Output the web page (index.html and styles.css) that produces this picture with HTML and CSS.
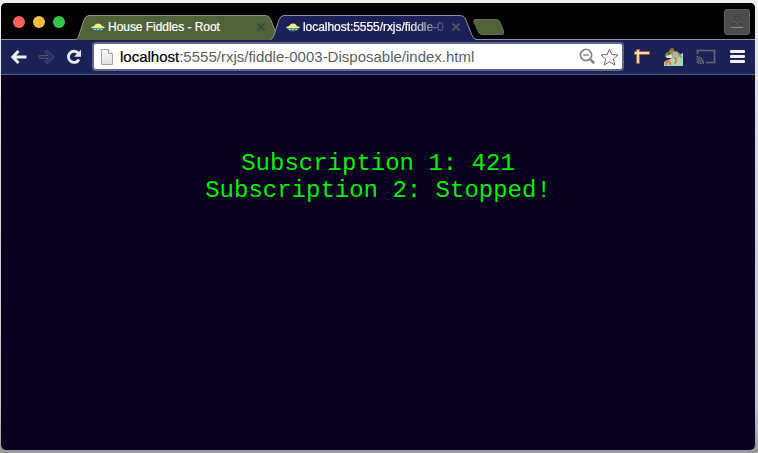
FILE: index.html
```html
<!DOCTYPE html>
<html lang="en">
<head>
<meta charset="utf-8">
<title>localhost:5555/rxjs/fiddle-0003-Disposable/index.html</title>
<link rel="stylesheet" href="styles.css">
</head>
<body>
<svg class="defs" width="0" height="0" aria-hidden="true">
  <symbol id="ufo" viewBox="0 0 15 9">
    <path d="M3.500 3.500Q4 .3 7.500 .3T11.500 3.500Z" fill="#f6ee88"/>
    <ellipse cx="7.500" cy="4.400" rx="7.200" ry="1.800" fill="#e3ec9c"/>
    <path d="M3 4Q4 1 7.500 1T12 4Q7.500 5.500 3 4Z" fill="#f8ee79"/>
    <path d="M1 5.400H14Q12 8.800 7.500 8.800T1 5.400Z" fill="#30777c"/>
    <path d="M3 6.500h2M6.500 6.500h2M10 6.500h2" stroke="#b9e8b7" stroke-width="1.300"/>
  </symbol>
</svg>
<div class="window">
  <header class="titlebar">
    <div class="lights"><i class="red"></i><i class="amber"></i><i class="green"></i></div>
    <div class="tab first">
      <svg class="shape" width="206" height="25" viewBox="0 0 206 25"><path d="M0 25C3 24 3 22 4 20L9 5Q10.500 .5 14 .5H190Q194 .5 195.500 4L201 18Q203 24 206 25Z" fill="#50623a"/><path d="M0 24.500C3 24 3 22 4 20L9 5Q10.500 .5 14 .5H190Q194 .5 195.500 4L201 18" fill="none" stroke="#8a947d"/></svg>
      <svg class="ufo"><use href="#ufo"/></svg>
      <span class="label">House Fiddles - Root</span>
      <svg class="close" viewBox="0 0 8 8"><path d="M.5 .5l7 7M7.500 .5L.5 7.500"/></svg>
    </div>
    <div class="tab active">
      <svg class="shape" width="206" height="26" viewBox="0 0 206 26"><path d="M0 26V25C3 24 3 22 4 20L9 5Q10.500 .5 14 .5H190Q194 .5 195.500 4L201 18Q203 24 206 24.500V26Z" fill="#1c2257"/><path d="M0 24.500C3 24 3 22 4 20L9 5Q10.500 .5 14 .5H190Q194 .5 195.500 4L201 18Q203 24 206 24.500" fill="none" stroke="#8d90ad"/></svg>
      <svg class="ufo"><use href="#ufo"/></svg>
      <span class="label fade">localhost:5555/rxjs/fiddle-0</span>
      <svg class="close" viewBox="0 0 8 8"><path d="M.5 .5l7 7M7.500 .5L.5 7.500"/></svg>
    </div>
    <svg class="newtab" width="32" height="17" viewBox="0 0 32 17"><path d="M3 .5H23Q26 .5 27 3L30.500 12Q31.500 15.500 29 15.500H9Q6.500 15.500 5.500 13L1 3Q0 .5 3 .5Z" fill="#50623a" stroke="#76826a" stroke-width=".8"/></svg>
    <div class="user">
      <svg width="14" height="14" viewBox="0 0 14 14" fill="none"><path d="M4.500 3.500Q4.500 1 7 1T9.500 3.500Q9.500 6.500 7 7.500Q4.500 6.500 4.500 3.500ZM1.500 11Q2 8.500 5.500 8.200M8.500 8.200Q12 8.500 12.500 11" stroke="#3a3a3a"/><path d="M1 12.500H13" stroke="#8b8b8b"/><path d="M4.500 5.500Q5.500 8 7 8T9.500 5.500" stroke="#717171" stroke-width=".7"/></svg>
    </div>
  </header>
  <nav class="toolbar">
    <svg class="back" width="18" height="16" viewBox="0 0 18 16"><path d="M8.500 2L2.800 8L8.500 14M3.500 8H16.500" fill="none" stroke="#eeeef5" stroke-width="3"/></svg>
    <svg class="forward" width="18" height="16" viewBox="0 0 18 16"><path d="M1 6.500H10L7 3.300L9 1.300L16 8L9 14.700L7 12.700L10 9.500H1Z" fill="#29305f" stroke="#4c5179"/></svg>
    <svg class="reload" width="16" height="16" viewBox="0 0 16 16"><path d="M12.400 4.300A5.600 5.600 0 1 0 13 10.500" fill="none" stroke="#e7e8f0" stroke-width="2.800"/><path d="M15 .8V7.800H8Z" fill="#e7e8f0"/></svg>
    <div class="omnibox">
      <svg class="page" width="12" height="16" viewBox="0 0 12 16"><defs><linearGradient id="paper" x2="0" y2="1"><stop stop-color="#fafafa"/><stop offset="1" stop-color="#dedede"/></linearGradient></defs><path d="M.5 .5H7.500L11.500 4.500V15.500H.5Z" fill="url(#paper)" stroke="#a2a2a2"/><path d="M7.500 .5V4.500H11.500" fill="#fff" stroke="#a2a2a2"/></svg>
      <span class="url"><b>localhost</b>:5555/rxjs/fiddle-0003-Disposable/index.html</span>
      <svg class="zoom" width="17" height="17" viewBox="0 0 17 17" fill="none" stroke="#878787"><circle cx="7" cy="7" r="5.600" stroke-width="1.700"/><path d="M4.300 7H9.700" stroke-width="1.500"/><path d="M11 11L15.300 15.300" stroke-width="2.500"/></svg>
      <svg class="star" width="19" height="18" viewBox="0 0 19 18"><path d="M9.500 1L11.800 6.500L18 7L13.300 11L14.800 17L9.500 13.700L4.200 17L5.700 11L1 7L7.200 6.500Z" fill="#fff" stroke="#686868" stroke-linejoin="round"/></svg>
    </div>
    <svg class="ruler" width="16" height="15" viewBox="0 0 16 15"><path d="M2.500 .5H5.500V2.500H15.500V5.500H5.500V14.500H2.500V5.500H.5V2.500H2.500Z" fill="#f8dfbd" stroke="#a8572e"/><path d="M6 4H15M4 6V14" stroke="#f2c494" stroke-dasharray="1 1"/></svg>
    <svg class="frog" width="20" height="20" viewBox="0 0 20 20"><path d="M0 15L8 11L19 6V19H0Z" fill="#a7d9b8"/><path d="M1 8Q2 5 5 4.500Q6 1 9 1.500L11 5L8 11L2 10.500Z" fill="#6fa93c"/><path d="M1.500 9Q5 9 7.500 7L8 11L3 11Z" fill="#e9efc4"/><path d="M9 5Q14 3 16.500 9L14 12L8 11Z" fill="#b9b0b6"/><path d="M12 3.500Q17 6 18.500 12L15 9Z" fill="#6fa93c"/><path d="M2 14Q6 13 6.500 18M3 14L2 18M10 11Q13 11 12 14L11 17" fill="none" stroke="#e57a2f" stroke-width="1.800"/><circle cx="8" cy="2" r="1.600" fill="#d2402a"/><circle cx="5" cy="6.500" r="1.200" fill="#b8342a"/></svg>
    <svg class="cast" width="20" height="16" viewBox="0 0 20 16" fill="none" stroke="#666670"><path d="M1.500 5V1.500H18.500V13.500H10" stroke-width="1.700"/><path d="M.5 7.500Q7 8.500 7.500 15M.5 10Q4.500 10.500 5 15M.5 12.500Q2.500 12.700 2.700 15" stroke-width="1.400"/></svg>
    <div class="menu"><i></i><i></i><i></i></div>
  </nav>
  <main class="content">
    <div>Subscription 1: 421</div>
    <div>Subscription 2: Stopped!</div>
  </main>
</div>
</body>
</html>
```
FILE: styles.css
```css
* { box-sizing: border-box; }
body {
  margin: 0;
  height: 453px;
  padding: 3px 3px 3px 1px;
  overflow: hidden;
  background: linear-gradient(#f1f1f1, #d9d9d9 30%, #c4c4c4 90%, #999);
  font-family: "Liberation Sans", Arial, sans-serif;
}
svg { display: block; flex: none; }
.defs { position: absolute; }
.window {
  height: 447px;
  overflow: hidden;
  border-radius: 5px;
  background: #090020;
}
.titlebar {
  display: flex;
  height: 37px;
  padding-top: 12px;
  background: #000;
  border-bottom: 1px solid #8d90ad;
}
.lights { display: flex; gap: 8px; width: 74px; padding: 1px 0 0 12px; }
.lights i { width: 12px; height: 12px; border-radius: 50%; }
.red { background: #fc605b; }
.amber { background: #fdbc40; }
.green { background: #34c84a; }
.tab {
  position: relative;
  display: flex;
  flex: none;
  width: 206px;
  height: 25px;
  padding-left: 16px;
  margin-right: -11px;
}
.active { z-index: 1; }
.shape { position: absolute; top: 0; left: 0; }
.ufo { position: relative; width: 14px; height: 9px; margin: 8px 3px 0 0; }
.label {
  position: relative;
  width: 145px;
  height: 24px;
  color: #fff;
  font-size: 12px;
  line-height: 24px;
  white-space: nowrap;
  -webkit-text-stroke: .2px #fff;
}
.first .label { letter-spacing: -.04px; }
.fade {
  letter-spacing: -.05px;
  -webkit-mask-image: linear-gradient(90deg, #000 105px, transparent 149px);
  mask-image: linear-gradient(90deg, #000 105px, transparent 149px);
}
.close { position: relative; width: 8px; height: 8px; margin: 8px 0 0 4px; stroke: #3f433b; stroke-width: 1.8; }
.active .close { stroke: #55555c; }
.newtab { margin: 4px 0 0 8px; }
.user {
  display: flex;
  align-items: center;
  justify-content: center;
  width: 26px;
  height: 26px;
  margin: -6px 5px 0 auto;
  border: 1px solid #606060;
  border-radius: 3px;
  background: #4c4c4c;
}
.toolbar {
  display: flex;
  align-items: center;
  height: 35px;
  padding: 0 10px 1px 9px;
  background: #1c2257;
  border-bottom: 1px solid #59607c;
}
.forward { margin-left: 10px; }
.reload { margin-left: 10px; }
.omnibox {
  display: flex;
  align-items: center;
  width: 532px;
  height: 29px;
  margin-left: 10px;
  padding: 0 3px 0 7px;
  background: #fff;
  border: 2px solid #62668d;
  border-radius: 4px;
}
.url { margin-left: 7px; color: #5e5e5e; font-size: 15px; white-space: nowrap; }
.url b { color: #000; font-weight: 400; -webkit-text-stroke: .2px #000; }
.zoom { margin-left: auto; }
.star { margin-left: 4px; }
.ruler { margin-left: 10px; }
.frog { margin-left: 14px; }
.cast { margin-left: 12px; }
.menu { display: flex; flex-direction: column; gap: 2px; margin-left: auto; }
.menu i { width: 15px; height: 3px; border-radius: 1px; background: #eeeef4; }
.content {
  padding-top: 75px;
  color: #00f000;
  font: 24px/27px "Liberation Mono", "Courier New", monospace;
  text-align: center;
}
```
